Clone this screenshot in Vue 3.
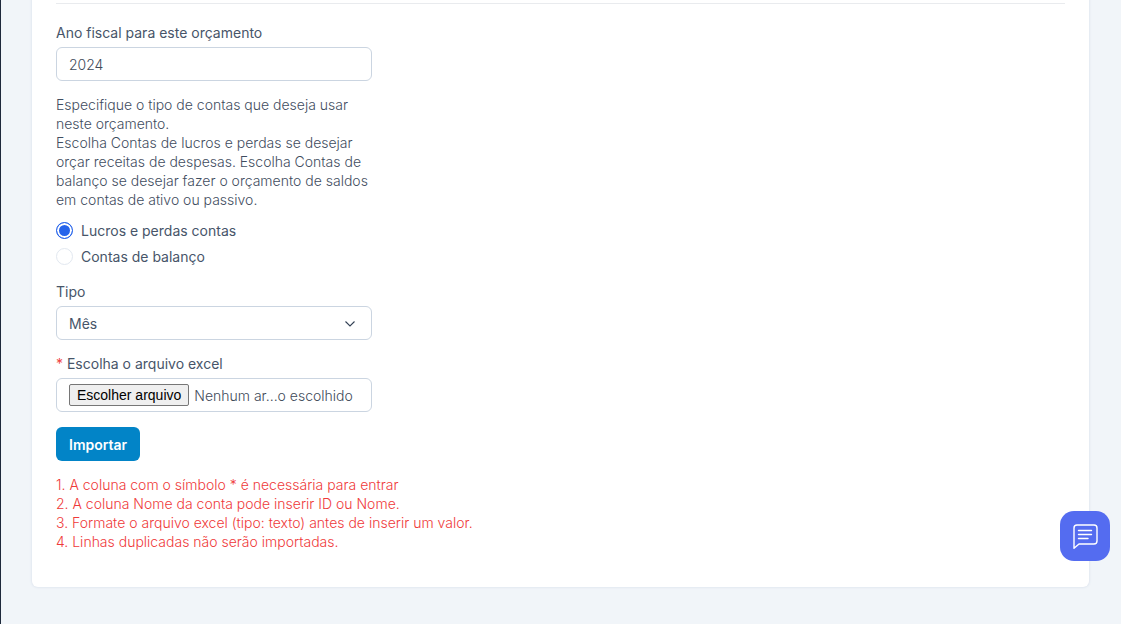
<template>
  <div class="page">
    <main class="card">
      <hr class="divider" />
      <form class="form" @submit.prevent="importBudget">
        <div class="field">
          <label for="year">Ano fiscal para este orçamento</label>
          <input id="year" v-model="year" class="control light" type="text" />
        </div>

        <div class="description">
          <p>Especifique o tipo de contas que deseja usar neste orçamento.</p>
          <p>
            Escolha Contas de lucros e perdas se desejar orçar receitas de
            despesas. Escolha Contas de balanço se desejar fazer o orçamento de
            saldos em contas de ativo ou passivo.
          </p>
        </div>

        <div class="radios">
          <div v-for="item in accountTypes" :key="item.value" class="radio">
            <input
              :id="item.value"
              v-model="accountType"
              type="radio"
              name="account_type"
              :value="item.value"
            />
            <label :for="item.value">{{ item.label }}</label>
          </div>
        </div>

        <div class="field">
          <label for="type">Tipo</label>
          <div class="select">
            <select id="type" v-model="type" class="control">
              <option value="month">Mês</option>
              <option value="quarter">Trimestre</option>
              <option value="year">Ano</option>
            </select>
            <svg class="chevron" width="12" height="12" viewBox="0 0 12 12" fill="none">
              <path d="M1.5 3.5 6 8 10.5 3.5" stroke="#334155" stroke-width="1.1" />
            </svg>
          </div>
        </div>

        <div class="field">
          <label for="file"><span class="required">*</span> Escolha o arquivo excel</label>
          <div class="control light file">
            <span class="file-button">Escolher arquivo</span>
            <span class="file-name">{{ fileName }}</span>
            <input id="file" type="file" accept=".xls,.xlsx" @change="selectFile" />
          </div>
        </div>

        <button class="submit" type="submit">Importar</button>
      </form>

      <div class="notes">
        <p v-for="(note, index) in notes" :key="index">{{ index + 1 }}. {{ note }}</p>
      </div>
    </main>

    <button class="chat" type="button" aria-label="Chat">
      <svg width="26" height="26" viewBox="0 0 26 26" fill="none" stroke="#fff" stroke-linecap="round" stroke-linejoin="round">
        <path d="M2 25.3V5a3 3 0 0 1 3-3h17a3 3 0 0 1 3 3v13a3 3 0 0 1-3 3H7Z" stroke-width="1.4" />
        <path d="M6.5 7.5h13M6.5 11.5h13M6.5 15.5h9.5" stroke-width="1.4" />
      </svg>
    </button>
  </div>
</template>

<script setup>
import { ref } from "vue";

const year = ref("2024");
const accountType = ref("profit_and_loss");
const type = ref("month");
const fileName = ref("Nenhum ar...o escolhido");

const accountTypes = [
  { value: "profit_and_loss", label: "Lucros e perdas contas" },
  { value: "balance_sheet", label: "Contas de balanço" },
];

const notes = [
  "A coluna com o símbolo * é necessária para entrar",
  "A coluna Nome da conta pode inserir ID ou Nome.",
  "Formate o arquivo excel (tipo: texto) antes de inserir um valor.",
  "Linhas duplicadas não serão importadas.",
];

const file = ref(null);

const selectFile = (event) => {
  file.value = event.target.files[0] || null;
  fileName.value = file.value ? file.value.name : "Nenhum ar...o escolhido";
};

const emit = defineEmits(["import"]);

const importBudget = () => {
  emit("import", {
    year: year.value,
    accountType: accountType.value,
    type: type.value,
    file: file.value,
  });
};
</script>

<style>
body {
  margin: 0;
  background: #f1f5f9;
}
</style>

<style scoped>
.page {
  box-sizing: border-box;
  min-height: 100vh;
  padding: 0 32px 36px 31px;
  border-left: 1px solid #1e293b;
  background: #f1f5f9;
  color: #475569;
  font-family: Inter, "Liberation Sans", sans-serif;
  font-size: 14px;
  line-height: 19px;
}

.card {
  padding: 3px 24px 36px;
  border-radius: 0 0 6px 6px;
  background: #fff;
  box-shadow: 0 0 2px 1px #e2e8f0;
}

.divider {
  height: 1px;
  margin: 0 0 19px;
  border: 0;
  background: #e9ebee;
}

.form {
  max-width: 316px;
}

.field {
  margin-bottom: 14px;
}

.field > label {
  display: block;
  margin-bottom: 5px;
}

.required {
  color: #ef4444;
}

.control {
  box-sizing: border-box;
  display: block;
  width: 100%;
  height: 34px;
  padding: 0 12px;
  border: 1px solid #cbd5e1;
  border-radius: 6px;
  background: #fff;
  color: #475569;
  font: inherit;
}

.control.light {
  color: #404a59;
  font-weight: 300;
}

p {
  margin: 0;
}

.description {
  color: #3f4d60;
  font-weight: 300;
}

.radios {
  display: flex;
  flex-direction: column;
  gap: 7px;
  margin: 12px 0 16px;
}

.radio {
  display: flex;
  align-items: center;
  gap: 8px;
}

.radio input {
  appearance: none;
  box-sizing: border-box;
  width: 17px;
  height: 17px;
  margin: 0;
  border: 1px solid #e2e8f0;
  border-radius: 50%;
  background: #fff;
}

.radio input:checked {
  border-color: #2563eb;
  background: #2563eb;
  box-shadow: inset 0 0 0 2px #fff;
}

.select {
  position: relative;
}

.select select {
  appearance: none;
}

.chevron {
  position: absolute;
  top: 12px;
  right: 16px;
  pointer-events: none;
}

.file {
  position: relative;
  display: flex;
  align-items: center;
  gap: 5px;
}

.file-button {
  padding: 1px 7px;
  border: 1px solid #767676;
  border-radius: 2px;
  background: #efefef;
  color: #000;
  font-family: "Liberation Sans", Arial, sans-serif;
  line-height: 18px;
  white-space: nowrap;
}

.file-name {
  overflow: hidden;
  white-space: nowrap;
}

.file input {
  position: absolute;
  inset: 0;
  width: 100%;
  opacity: 0;
}

.submit {
  display: block;
  height: 34px;
  margin-top: 15px;
  padding: 0 13px;
  border: 0;
  border-radius: 6px;
  background: #0284c7;
  color: #fff;
  font: inherit;
  font-weight: 600;
}

.notes {
  margin-top: 14px;
  color: #ef3a3a;
  font-weight: 300;
}

.chat {
  position: fixed;
  right: 11px;
  bottom: 63px;
  display: flex;
  align-items: center;
  justify-content: center;
  width: 50px;
  height: 50px;
  padding: 0;
  border: 0;
  border-radius: 14px;
  background: #546cf0;
}
</style>
